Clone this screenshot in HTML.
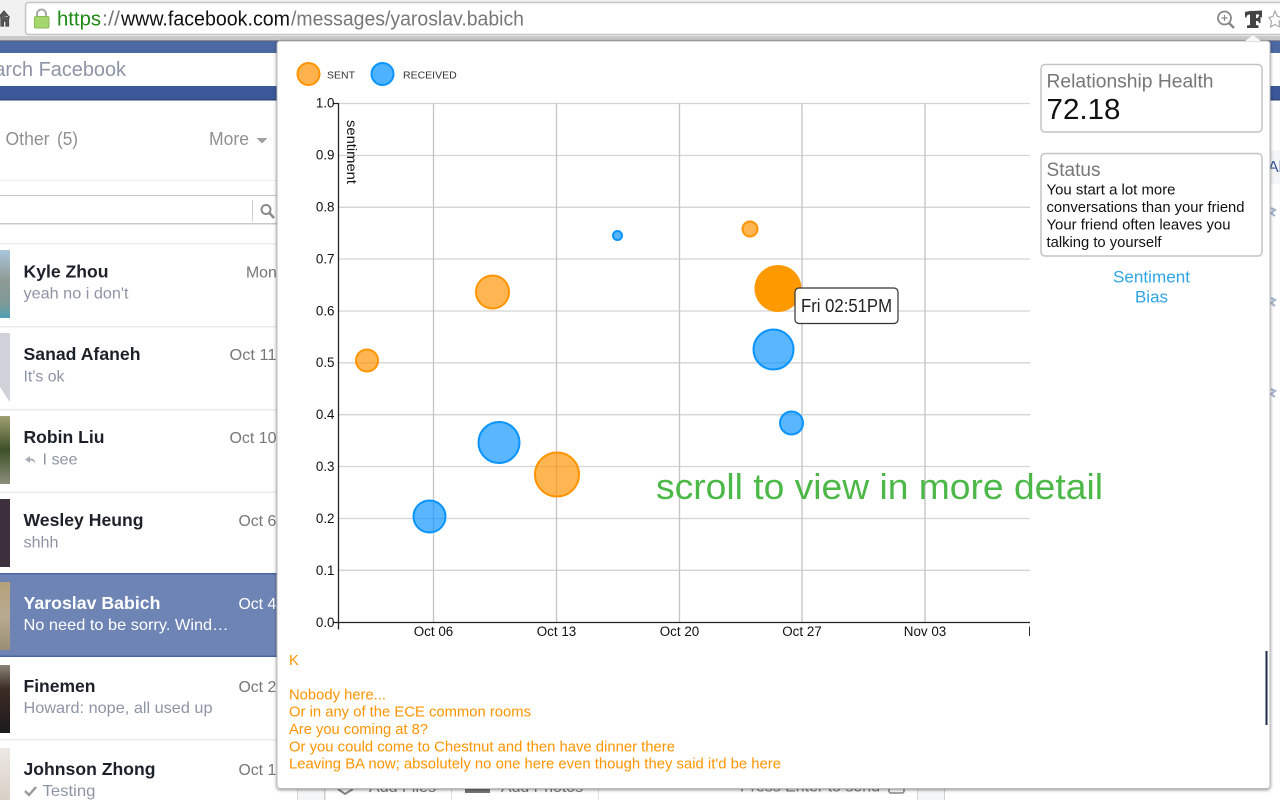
<!DOCTYPE html>
<html><head><meta charset="utf-8"><style>
html,body{margin:0;padding:0;background:#fff;width:1280px;height:800px;overflow:hidden}
svg{display:block}
text{font-family:"Liberation Sans",Arial,sans-serif}
.n{font-size:17.5px;font-weight:700;fill:#1d2129}
.p{font-size:15.8px;fill:#8d94a5}
.d{font-size:15.8px;fill:#777}
.t{font-size:13.4px;fill:#111}
.o{font-size:14.6px;fill:#ff9400}
.g{stroke:#d4d4d4;stroke-width:1.3}
.s{font-size:14.6px;fill:#111}
</style></head><body>
<svg width="1280" height="800" viewBox="0 0 1280 800" xmlns="http://www.w3.org/2000/svg">
<defs>
<linearGradient id="a1" x1="0" y1="0" x2="0" y2="1"><stop offset="0" stop-color="#a9c6dc"/><stop offset=".45" stop-color="#8f9a95"/><stop offset=".8" stop-color="#7d9a98"/><stop offset="1" stop-color="#4ea0b4"/></linearGradient>
<linearGradient id="a3" x1="0" y1="0" x2="0" y2="1"><stop offset="0" stop-color="#a0a070"/><stop offset=".5" stop-color="#3d5028"/><stop offset="1" stop-color="#8b8f7a"/></linearGradient>
<linearGradient id="a5" x1="0" y1="0" x2="0" y2="1"><stop offset="0" stop-color="#b5a179"/><stop offset=".5" stop-color="#b8aa92"/><stop offset="1" stop-color="#9a8f73"/></linearGradient>
<linearGradient id="a6" x1="0" y1="0" x2="0" y2="1"><stop offset="0" stop-color="#8a8378"/><stop offset=".35" stop-color="#3d2c25"/><stop offset="1" stop-color="#1b1a1c"/></linearGradient>
<linearGradient id="a7" x1="0" y1="0" x2="0" y2="1"><stop offset="0" stop-color="#ece8e4"/><stop offset="1" stop-color="#d8d0c6"/></linearGradient>
<filter id="sh" x="-2%" y="-2%" width="104%" height="104%"><feDropShadow dx="0" dy="1" stdDeviation="1.6" flood-color="#000" flood-opacity=".45"/></filter>
</defs>

<!-- browser chrome -->
<rect width="1280" height="41" fill="#f0f0f0"/>
<rect x="0" y="36" width="1280" height="5" fill="#c9c9c9"/>
<rect x="0" y="40" width="1280" height="1.500" fill="#8a8a8a"/>
<rect x="25.500" y="2.500" width="1300" height="32" rx="3" fill="#fff" stroke="#c4c4c4" stroke-width="1.500"/>
<path d="M-2 18 L4 11 L9 17 L9 16 M1 17V26H3.500V21H6V26H8.500V17" fill="#5a5a5a" stroke="#4a4a4a" stroke-width="1.200"/>
<path d="M37 17V14a4.300 4.300 0 0 1 9 0V17" fill="none" stroke="#a8a8a8" stroke-width="2"/>
<rect x="34.500" y="16.500" width="14.500" height="11.500" rx="1.500" fill="#a5d86c" stroke="#8cb85a"/>
<text x="57" y="25.500" font-size="20" textLength="44" lengthAdjust="spacingAndGlyphs" fill="#1e8a14">https</text>
<text x="102" y="25.500" font-size="20" textLength="18" lengthAdjust="spacingAndGlyphs" fill="#777">://</text>
<text x="121" y="25.500" font-size="20" textLength="169" lengthAdjust="spacingAndGlyphs" fill="#111">www.facebook.com</text>
<text x="291" y="25.500" font-size="20" textLength="233" lengthAdjust="spacingAndGlyphs" fill="#777">/messages/yaroslav.babich</text>
<circle cx="1224.500" cy="18" r="6.500" fill="none" stroke="#888" stroke-width="1.800"/>
<path d="M1229 23 L1234 28" stroke="#888" stroke-width="2.500"/>
<path d="M1221.500 18H1227.500M1224.500 15V21" stroke="#888" stroke-width="1.200"/>
<path d="M1245 11.500C1247 12.500 1249 10.500 1252 11L1262 10.500V17.500L1260 17C1260 15 1258.500 14 1256 14.500V18C1257.500 18.500 1258.500 17.500 1259 15.500H1260.500V23H1259C1258.500 21 1257.500 20.500 1256 21V25L1258.500 25.500V28H1247V25.500L1250 25V14.500C1248 14.500 1246.500 15.500 1246.500 17.500H1245Z" fill="#444"/>
<path d="M1275 11 L1277.500 16.500 L1283 17.500 L1279 21.500 L1280 27 L1275 24.500 L1270.500 27 L1271.500 21.500 L1269 17.500 L1273 16.500Z" fill="#fff" stroke="#aaa" stroke-width="1.200"/>

<!-- fb header -->
<rect y="41" width="1280" height="12" fill="#4d69a3"/>
<rect y="53" width="1280" height="33" fill="#fff"/>
<rect y="86" width="1280" height="13" fill="#3b5898"/>
<rect y="99" width="1280" height="1.500" fill="#2f477a"/>
<text x="-30" y="76" font-size="20" fill="#8d94a5" textLength="156" lengthAdjust="spacingAndGlyphs">Search Facebook</text>

<!-- tabs -->
<text x="5.500" y="145" font-size="18" fill="#909090" textLength="44" lengthAdjust="spacingAndGlyphs">Other</text>
<text x="57" y="145" font-size="18" fill="#909090" textLength="21" lengthAdjust="spacingAndGlyphs">(5)</text>
<text x="209" y="145" font-size="18" fill="#909090" textLength="40" lengthAdjust="spacingAndGlyphs">More</text>
<path d="M256.500 138H267.500L262 143.500Z" fill="#a0a0a0"/>
<rect y="180" width="280" height="1" fill="#e9ebee"/>
<rect y="195" width="280" height="1" fill="#c8c8c8"/>
<rect y="223" width="280" height="1.500" fill="#c8c8c8"/>
<rect x="252" y="200" width="1" height="22" fill="#d0d0d0"/>
<circle cx="266" cy="209.500" r="4.500" fill="none" stroke="#8a8a8a" stroke-width="2"/>
<path d="M269.500 213 L274 218" stroke="#8a8a8a" stroke-width="2.500"/>
<rect y="243" width="280" height="1.500" fill="#eceeef"/>

<!-- right strip -->
<rect x="1270" y="150" width="10" height="34" fill="#f5f6f7"/>
<text x="1268" y="172" font-size="16" fill="#3b5998">All</text>
<path d="M1271 208 L1275 210 L1271 213 L1275 216" stroke="#a9b6d0" stroke-width="2.200" fill="none"/>
<path d="M1271 298 L1275 300 L1271 303 L1275 306" stroke="#a9b6d0" stroke-width="2.200" fill="none"/>
<path d="M1271 389 L1275 391 L1271 394 L1275 397" stroke="#a9b6d0" stroke-width="2.200" fill="none"/>

<!-- conversation list -->
<rect y="250" width="10" height="68" fill="url(#a1)"/>
<rect y="333" width="10" height="68" fill="#cfd3d9"/>
<path d="M0 387 L9 401 H0Z" fill="#fff"/>
<rect y="416" width="10" height="68" fill="url(#a3)"/>
<rect y="499" width="10" height="68" fill="#3e2f3c"/>
<rect y="326" width="280" height="1.500" fill="#e9ebee"/>
<rect y="409" width="280" height="1.500" fill="#e9ebee"/>
<rect y="491.500" width="280" height="1.500" fill="#e9ebee"/>
<rect y="739" width="280" height="1.500" fill="#e9ebee"/>

<text class="n" x="23.500" y="277.500" textLength="85" lengthAdjust="spacingAndGlyphs">Kyle Zhou</text>
<text class="p" x="23.500" y="298.500" textLength="105" lengthAdjust="spacingAndGlyphs">yeah no i don't</text>
<text class="d" x="246" y="277.500">Mon</text>
<text class="n" x="23.500" y="360" textLength="117" lengthAdjust="spacingAndGlyphs">Sanad Afaneh</text>
<text class="p" x="23.500" y="381.500" textLength="41" lengthAdjust="spacingAndGlyphs">It's ok</text>
<text class="d" x="229.500" y="360" textLength="47" lengthAdjust="spacingAndGlyphs">Oct 11</text>
<text class="n" x="23.500" y="443" textLength="81" lengthAdjust="spacingAndGlyphs">Robin Liu</text>
<path d="M30 456 L25 459.500 L30 463 V460.500 C33 460.500 34.500 461.500 35.500 464 C35.500 460 33.500 458.500 30 458.500Z" fill="#a8adb8"/>
<text class="p" x="42.500" y="464.500" textLength="35" lengthAdjust="spacingAndGlyphs">I see</text>
<text class="d" x="229.500" y="443" textLength="47" lengthAdjust="spacingAndGlyphs">Oct 10</text>
<text class="n" x="23.500" y="526" textLength="120" lengthAdjust="spacingAndGlyphs">Wesley Heung</text>
<text class="p" x="23.500" y="547.500" textLength="35" lengthAdjust="spacingAndGlyphs">shhh</text>
<text class="d" x="238.500" y="526">Oct 6</text>

<rect y="573" width="280" height="84" fill="#6d84b4"/>
<rect y="573" width="280" height="1.500" fill="#4c66a0"/>
<rect y="655.500" width="280" height="1.500" fill="#4c66a0"/>
<rect y="582" width="10" height="68" fill="url(#a5)"/>
<text class="n" x="23.500" y="609" style="fill:#fff" textLength="137" lengthAdjust="spacingAndGlyphs">Yaroslav Babich</text>
<text class="p" x="23.500" y="630" style="fill:#fff" textLength="205" lengthAdjust="spacingAndGlyphs">No need to be sorry. Wind…</text>
<text class="d" x="238.500" y="609" style="fill:#fff">Oct 4</text>

<rect y="665" width="10" height="68" fill="url(#a6)"/>
<text class="n" x="23.500" y="692" textLength="72" lengthAdjust="spacingAndGlyphs">Finemen</text>
<text class="p" x="23.500" y="713" textLength="189" lengthAdjust="spacingAndGlyphs">Howard: nope, all used up</text>
<text class="d" x="238.500" y="692">Oct 2</text>
<rect y="748" width="10" height="52" fill="url(#a7)"/>
<text class="n" x="23.500" y="775" textLength="132" lengthAdjust="spacingAndGlyphs">Johnson Zhong</text>
<path d="M25 791 L29 795 L36 787" fill="none" stroke="#9a9a9a" stroke-width="2.400"/>
<text class="p" x="42.500" y="796" textLength="53" lengthAdjust="spacingAndGlyphs">Testing</text>
<text class="d" x="238.500" y="775">Oct 1</text>

<!-- bottom composer behind -->
<rect x="297" y="789" width="1" height="11" fill="#d8d8d8"/>
<rect x="298" y="789" width="26" height="11" fill="#f5f6f7"/>
<rect x="324" y="789" width="1.500" height="11" fill="#d0d0d0"/>
<rect x="451" y="789" width="1" height="11" fill="#e0e0e0"/>
<rect x="598" y="789" width="1" height="11" fill="#e0e0e0"/>
<rect x="917" y="789" width="1" height="11" fill="#d8d8d8"/>
<rect x="918" y="789" width="26" height="11" fill="#f5f6f7"/>
<rect x="944" y="789" width="1" height="11" fill="#d0d0d0"/>
<text x="369" y="792" font-size="15" fill="#7a7a7a" textLength="67" lengthAdjust="spacingAndGlyphs">Add Files</text>
<text x="501" y="792" font-size="15" fill="#7a7a7a" textLength="82" lengthAdjust="spacingAndGlyphs">Add Photos</text>
<text x="740" y="791.500" font-size="14.500" fill="#7a7a7a" textLength="140" lengthAdjust="spacingAndGlyphs">Press Enter to send</text>
<path d="M338 789 L345 794 L353 789" fill="none" stroke="#888" stroke-width="2"/>
<rect x="465" y="788" width="25" height="5" fill="#777"/>
<rect x="889" y="786" width="15" height="7" rx="2" fill="none" stroke="#888" stroke-width="1.500"/>

<!-- popup -->
<rect x="277" y="41" width="993" height="747.500" rx="3" fill="#fff" stroke="#bdbdbd" filter="url(#sh)"/>
<path d="M1245 41 L1253 35 L1261 41Z" fill="#f8f8f8"/>

<!-- legend -->
<circle cx="308.500" cy="74" r="11" fill="#ffb24d" stroke="#ff9400" stroke-width="2"/>
<text x="327" y="78.500" font-size="10.500" fill="#333">SENT</text>
<circle cx="382.500" cy="74" r="11" fill="#4db2ff" stroke="#0a94ff" stroke-width="2"/>
<text x="403" y="78.500" font-size="10.500" fill="#333">RECEIVED</text>

<!-- grid -->
<g class="g">
<path d="M338 103.500H1030M338 155.500H1030M338 207.300H1030M338 259H1030M338 311H1030M338 362.800H1030M338 414.700H1030M338 466.500H1030M338 518.500H1030M338 570.300H1030"/>
<path d="M433.500 103V622M556.500 103V622M679.500 103V622M802 103V622M925 103V622" stroke="#c4c4c4"/>
</g>
<path d="M338.500 103V629.500M333 103.500H338.500M1030 622.500H333" stroke="#222" stroke-width="1.300" fill="none"/>
<text class="t" x="334.500" y="107.500" text-anchor="end">1.0</text>
<text class="t" x="334.500" y="159.500" text-anchor="end">0.9</text>
<text class="t" x="334.500" y="211.500" text-anchor="end">0.8</text>
<text class="t" x="334.500" y="263.500" text-anchor="end">0.7</text>
<text class="t" x="334.500" y="315.500" text-anchor="end">0.6</text>
<text class="t" x="334.500" y="367" text-anchor="end">0.5</text>
<text class="t" x="334.500" y="419" text-anchor="end">0.4</text>
<text class="t" x="334.500" y="471" text-anchor="end">0.3</text>
<text class="t" x="334.500" y="523" text-anchor="end">0.2</text>
<text class="t" x="334.500" y="575" text-anchor="end">0.1</text>
<text class="t" x="334.500" y="627" text-anchor="end">0.0</text>
<text class="t" x="433.500" y="636" text-anchor="middle">Oct 06</text>
<text class="t" x="556.500" y="636" text-anchor="middle">Oct 13</text>
<text class="t" x="679.500" y="636" text-anchor="middle">Oct 20</text>
<text class="t" x="802" y="636" text-anchor="middle">Oct 27</text>
<text class="t" x="925" y="636" text-anchor="middle">Nov 03</text>
<svg x="1020" y="620" width="10" height="20"><text class="t" x="8" y="16">Nov</text></svg>
<text x="347" y="120" font-size="14" fill="#111" textLength="64" lengthAdjust="spacingAndGlyphs" transform="rotate(90 347 120)">sentiment</text>

<!-- bubbles -->
<g fill="#ff9400" fill-opacity=".68" stroke="#ff9400" stroke-width="2">
<circle cx="367" cy="360.500" r="11"/>
<circle cx="492.500" cy="292" r="16.500"/>
<circle cx="557" cy="474.500" r="22"/>
<circle cx="750" cy="229" r="7.500"/>
</g>
<circle cx="778" cy="288.500" r="23.500" fill="#ff9900"/>
<g fill="#0a94ff" fill-opacity=".68" stroke="#0a94ff" stroke-width="2">
<circle cx="429.500" cy="516.500" r="16"/>
<circle cx="499" cy="442.500" r="20.500"/>
<circle cx="617.500" cy="235.500" r="4.500"/>
<circle cx="773.500" cy="349.500" r="20"/>
<circle cx="791.500" cy="423" r="11.500"/>
</g>

<!-- tooltip -->
<rect x="795" y="288" width="103" height="35.500" rx="4" fill="#fff" fill-opacity=".93" stroke="#333" stroke-width="1.200"/>
<text x="801" y="312" font-size="18" fill="#222" textLength="91" lengthAdjust="spacingAndGlyphs">Fri 02:51PM</text>

<!-- overlay text -->
<text x="656" y="499" font-size="36" fill="#4cb848" textLength="447" lengthAdjust="spacingAndGlyphs">scroll to view in more detail</text>

<!-- side panels -->
<rect x="1041" y="64.500" width="221" height="67.500" rx="4" fill="#fff" stroke="#c4c4c4" stroke-width="1.500"/>
<text x="1046.500" y="87.500" font-size="19" fill="#777" textLength="167" lengthAdjust="spacingAndGlyphs">Relationship Health</text>
<text x="1046.500" y="119" font-size="28.500" fill="#111" textLength="74" lengthAdjust="spacingAndGlyphs">72.18</text>
<rect x="1041" y="153.500" width="221" height="102.500" rx="4" fill="#fff" stroke="#c4c4c4" stroke-width="1.500"/>
<text x="1046.500" y="176" font-size="19" fill="#777" textLength="54" lengthAdjust="spacingAndGlyphs">Status</text>
<text class="s" x="1046.500" y="194.500" textLength="129" lengthAdjust="spacingAndGlyphs">You start a lot more</text>
<text class="s" x="1046.500" y="212" textLength="198" lengthAdjust="spacingAndGlyphs">conversations than your friend</text>
<text class="s" x="1046.500" y="229.500" textLength="184" lengthAdjust="spacingAndGlyphs">Your friend often leaves you</text>
<text class="s" x="1046.500" y="247" textLength="115" lengthAdjust="spacingAndGlyphs">talking to yourself</text>
<text x="1113" y="282.500" font-size="16.500" fill="#2ea5e6" textLength="77" lengthAdjust="spacingAndGlyphs">Sentiment</text>
<text x="1135" y="302.500" font-size="16.500" fill="#2ea5e6" textLength="33" lengthAdjust="spacingAndGlyphs">Bias</text>

<!-- messages -->
<text class="o" x="289" y="665">K</text>
<text class="o" x="289" y="699.500" textLength="97" lengthAdjust="spacingAndGlyphs">Nobody here...</text>
<text class="o" x="289" y="716.500" textLength="242" lengthAdjust="spacingAndGlyphs">Or in any of the ECE common rooms</text>
<text class="o" x="289" y="734" textLength="139" lengthAdjust="spacingAndGlyphs">Are you coming at 8?</text>
<text class="o" x="289" y="751.500" textLength="386" lengthAdjust="spacingAndGlyphs">Or you could come to Chestnut and then have dinner there</text>
<text class="o" x="289" y="768.500" textLength="492" lengthAdjust="spacingAndGlyphs">Leaving BA now; absolutely no one here even though they said it'd be here</text>

<!-- scrollbar -->
<rect x="1265.500" y="651" width="2" height="74" fill="#1c2c4a"/>
</svg>
</body></html>
